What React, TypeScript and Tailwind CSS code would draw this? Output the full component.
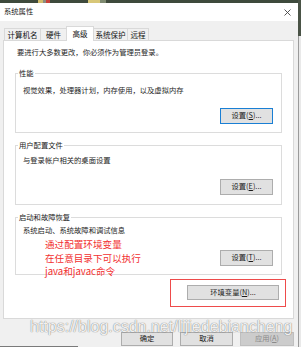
import type { ReactNode } from 'react';

const CJK = "font-['Microsoft_YaHei','Noto_Sans_CJK_SC',sans-serif]";

function Btn({
  children,
  focused,
  disabled,
  className,
}: {
  children: ReactNode;
  focused?: boolean;
  disabled?: boolean;
  className: string;
}) {
  let tone = 'bg-[#e1e1e1] border-[#adadad] text-[#1a1a1a]';
  if (focused) tone = 'bg-[#e1e1e1] border-[#1a7fd4] text-[#1a1a1a]';
  if (disabled) tone = 'bg-[#cccccc] border-[#bfbfbf] text-[#8a8a8a]';
  return (
    <div
      className={`flex items-center justify-center border text-[7.3px] leading-none ${tone} ${className}`}
    >
      {children}
    </div>
  );
}

function Group({
  title,
  desc,
  boxClass,
  descClass,
  btnRowClass,
  button,
  children,
}: {
  title: string;
  desc: string;
  boxClass: string;
  descClass: string;
  btnRowClass: string;
  button: ReactNode;
  children?: ReactNode;
}) {
  return (
    <div className={`relative ml-[11px] w-[267px] border border-[#dcdcdc] ${boxClass}`}>
      <span className="absolute -top-[6px] left-[2px] bg-white px-[1px] text-[7.3px] leading-[10px] text-[#222]">
        {title}
      </span>
      <p className={`pl-[7px] text-[7.3px] leading-[10px] text-[#1e1e1e] ${descClass}`}>{desc}</p>
      <div className={`flex justify-end pr-[8px] ${btnRowClass}`}>{button}</div>
      {children}
    </div>
  );
}

function Tab({ label, w, active }: { label: string; w: string; active?: boolean }) {
  if (active) {
    return (
      <div
        className={`relative z-10 -mr-px flex h-[15px] items-start justify-center border border-b-0 border-[#d9d9d9] bg-white pt-[2px] text-[7.5px] leading-[10px] text-[#111] ${w}`}
      >
        {label}
      </div>
    );
  }
  return (
    <div
      className={`-mr-px mt-[2px] flex h-[12px] items-center justify-center border border-b-0 border-[#d9d9d9] bg-[#f0f0f0] text-[7.5px] leading-none text-[#111] ${w}`}
    >
      {label}
    </div>
  );
}

export default function App() {
  return (
    <div className={`relative flex h-[347px] w-[301px] overflow-hidden bg-[#f0f0f0] ${CJK}`}>
      <div className="flex w-[298px] flex-col">
        {/* desktop strip behind the dialog */}
        <div className="flex h-[3px] bg-[#3e4a3c]">
          <div className="w-[38px]" />
          <div className="w-[5px] bg-[#d3bd6c]" />
          <div className="w-[3px] bg-[#8c8c80]" />
          <div className="w-[4px] bg-[#c8413a]" />
          <div className="w-[38px]" />
          <div className="w-[12px] bg-[#d8c778]" />
          <div className="w-[6px] bg-[#7e8a70]" />
        </div>

        {/* title bar */}
        <div className="flex h-[18px] items-center justify-between bg-white pl-[4px] pr-[7px]">
          <span className="text-[7.3px] leading-none text-[#222]">系统属性</span>
          <svg width="7" height="7" viewBox="0 0 7 7" className="text-[#444]">
            <path d="M0.5 0.5 L6.5 6.5 M6.5 0.5 L0.5 6.5" stroke="currentColor" strokeWidth="0.9" />
          </svg>
        </div>

        {/* tabs */}
        <div className="flex pl-[4px] pt-[5px]">
          <Tab label="计算机名" w="w-[37px]" />
          <Tab label="硬件" w="w-[27px]" />
          <Tab label="高级" w="w-[28px]" active />
          <Tab label="系统保护" w="w-[35px]" />
          <Tab label="远程" w="w-[22px]" />
        </div>

        {/* tab page */}
        <div className="-mt-px ml-[3px] h-[279px] w-[291px] border border-[#d9d9d9] bg-white">
          <p className="pl-[13px] pt-[6px] text-[7.3px] leading-[10px] text-[#1e1e1e]">
            要进行大多数更改，你必须作为管理员登录。
          </p>

          <div className="mt-[16px] flex flex-col gap-[12px]">
            <Group
              title="性能"
              desc="视觉效果，处理器计划，内存使用，以及虚拟内存"
              boxClass="h-[60px]"
              descClass="pt-[11px]"
              btnRowClass="mt-[13px]"
              button={
                <Btn focused className="h-[16px] w-[53px]">
                  设置(<span className="underline">S</span>)...
                </Btn>
              }
            />
            <Group
              title="用户配置文件"
              desc="与登录帐户相关的桌面设置"
              boxClass="h-[60px]"
              descClass="pt-[9px]"
              btnRowClass="mt-[14px]"
              button={
                <Btn className="h-[16px] w-[53px]">
                  设置(<span className="underline">E</span>)...
                </Btn>
              }
            />
            <Group
              title="启动和故障恢复"
              desc="系统启动、系统故障和调试信息"
              boxClass="h-[58px]"
              descClass="pt-[7px]"
              btnRowClass="mt-[15px]"
              button={
                <Btn className="h-[16px] w-[53px]">
                  设置(<span className="underline">T</span>)...
                </Btn>
              }
            >
              <div className="absolute left-[29px] top-[20px] text-[9.6px] leading-[13.5px] text-[#f23030]">
                <p>通过配置环境变量</p>
                <p>在任意目录下可以执行</p>
                <p>java和javac命令</p>
              </div>
            </Group>
          </div>

          <div className="ml-[166px] mt-[4px] h-[28px] w-[116px] border border-[#ee4b4b] pl-[16px] pt-[5px]">
            <Btn className="h-[15px] w-[92px]">
              环境变量(<span className="underline">N</span>)...
            </Btn>
          </div>
        </div>

        {/* dialog buttons */}
        <div className="mt-[13px] flex justify-end gap-[7px] pr-[4px]">
          <Btn className="h-[14px] w-[52px]">确定</Btn>
          <Btn className="h-[14px] w-[53px]">取消</Btn>
          <Btn disabled className="h-[14px] w-[54px]">
            应用(<span className="underline">A</span>)
          </Btn>
        </div>
      </div>

      {/* background window edge */}
      <div className="flex w-[3px] flex-col">
        <div className="h-[36px] bg-[#4a5346]" />
        <div className="flex-1 border-l border-[#9a9a9a] bg-[#e9e9e9]" />
      </div>

      {/* watermark over the dialog */}
      <span className="pointer-events-none absolute left-[30px] top-[319px] font-['Liberation_Sans',sans-serif] text-[16px] leading-[16px] text-white/90 [text-shadow:0_0_1px_rgba(0,0,0,0.45),0_0_1px_rgba(0,0,0,0.3)]">
        https://blog.csdn.net/lijiedebiancheng
      </span>

      <div className="absolute bottom-0 left-0 h-px w-[78px] bg-[#7a7a7a]" />
    </div>
  );
}
